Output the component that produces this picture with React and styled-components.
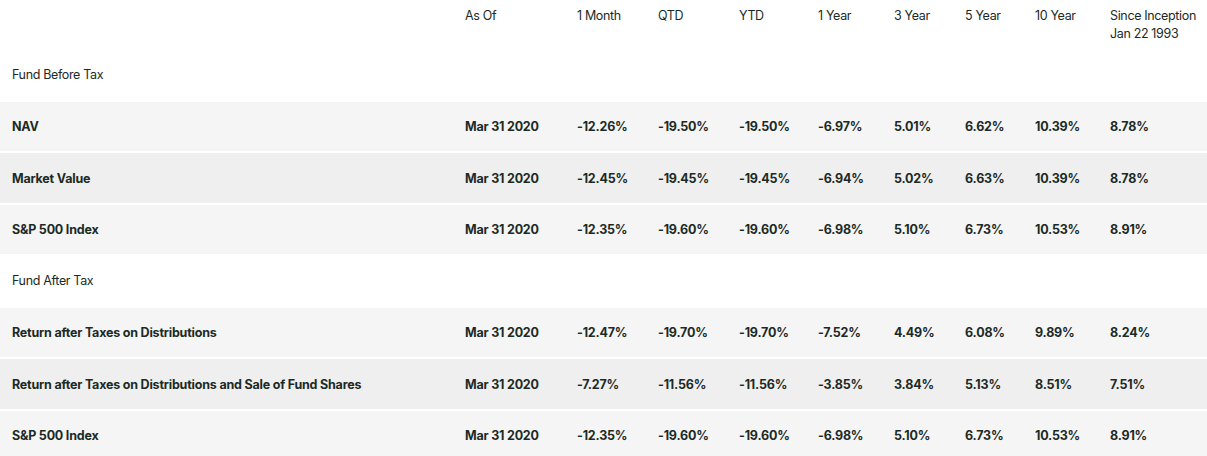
import React from 'react';
import styled, { createGlobalStyle } from 'styled-components';

const GlobalStyle = createGlobalStyle`
  body {
    margin: 0;
    background: #ffffff;
    font-family: Inter, "Liberation Sans", Arial, sans-serif;
    color: #1c2a25;
  }
`;

const COLS = '465px 112px 81px 81px 79px 76px 71px 70px 75px 1fr';

const Table = styled.div`
  display: flex;
  flex-direction: column;
  gap: 2px;
  width: 1207px;
`;

const Row = styled.div`
  display: grid;
  grid-template-columns: ${COLS};
  align-items: ${p => (p.$head ? 'start' : 'center')};
  height: ${p => (p.$head ? '48px' : '49.5px')};
  box-sizing: border-box;
  padding-top: ${p => (p.$head ? '7px' : p.$bg ? '2px' : '1px')};
  background: ${p => p.$bg || 'transparent'};
`;

const Cell = styled.div`
  font-size: 12.5px;
  line-height: 18px;
  letter-spacing: ${p => (p.$bold ? '-0.2px' : '-0.35px')};
  font-weight: ${p => (p.$bold ? 700 : 400)};
  padding-left: ${p => (p.$first ? '12px' : '0')};
  white-space: nowrap;
`;

const columns = ['As Of', '1 Month', 'QTD', 'YTD', '1 Year', '3 Year', '5 Year', '10 Year'];

const sections = [
  {
    title: 'Fund Before Tax',
    rows: [
      ['NAV', '-12.26%', '-19.50%', '-19.50%', '-6.97%', '5.01%', '6.62%', '10.39%', '8.78%'],
      ['Market Value', '-12.45%', '-19.45%', '-19.45%', '-6.94%', '5.02%', '6.63%', '10.39%', '8.78%'],
      ['S&P 500 Index', '-12.35%', '-19.60%', '-19.60%', '-6.98%', '5.10%', '6.73%', '10.53%', '8.91%'],
    ],
  },
  {
    title: 'Fund After Tax',
    rows: [
      ['Return after Taxes on Distributions', '-12.47%', '-19.70%', '-19.70%', '-7.52%', '4.49%', '6.08%', '9.89%', '8.24%'],
      ['Return after Taxes on Distributions and Sale of Fund Shares', '-7.27%', '-11.56%', '-11.56%', '-3.85%', '3.84%', '5.13%', '8.51%', '7.51%'],
      ['S&P 500 Index', '-12.35%', '-19.60%', '-19.60%', '-6.98%', '5.10%', '6.73%', '10.53%', '8.91%'],
    ],
  },
];

export default function App() {
  return (
    <>
      <GlobalStyle />
      <Table>
        <Row $head>
          <Cell $first />
          {columns.map(c => (
            <Cell key={c}>{c}</Cell>
          ))}
          <Cell>
            Since Inception
            <br />
            Jan 22 1993
          </Cell>
        </Row>
        {sections.map(s => (
          <React.Fragment key={s.title}>
            <Row>
              <Cell $first>{s.title}</Cell>
            </Row>
            {s.rows.map((r, i) => (
              <Row key={r[0] + i} $bg={i === 1 ? '#efefef' : '#f5f5f5'}>
                <Cell $first $bold>{r[0]}</Cell>
                <Cell $bold>Mar 31 2020</Cell>
                {r.slice(1).map((v, j) => (
                  <Cell key={j} $bold>{v}</Cell>
                ))}
              </Row>
            ))}
          </React.Fragment>
        ))}
      </Table>
    </>
  );
}
